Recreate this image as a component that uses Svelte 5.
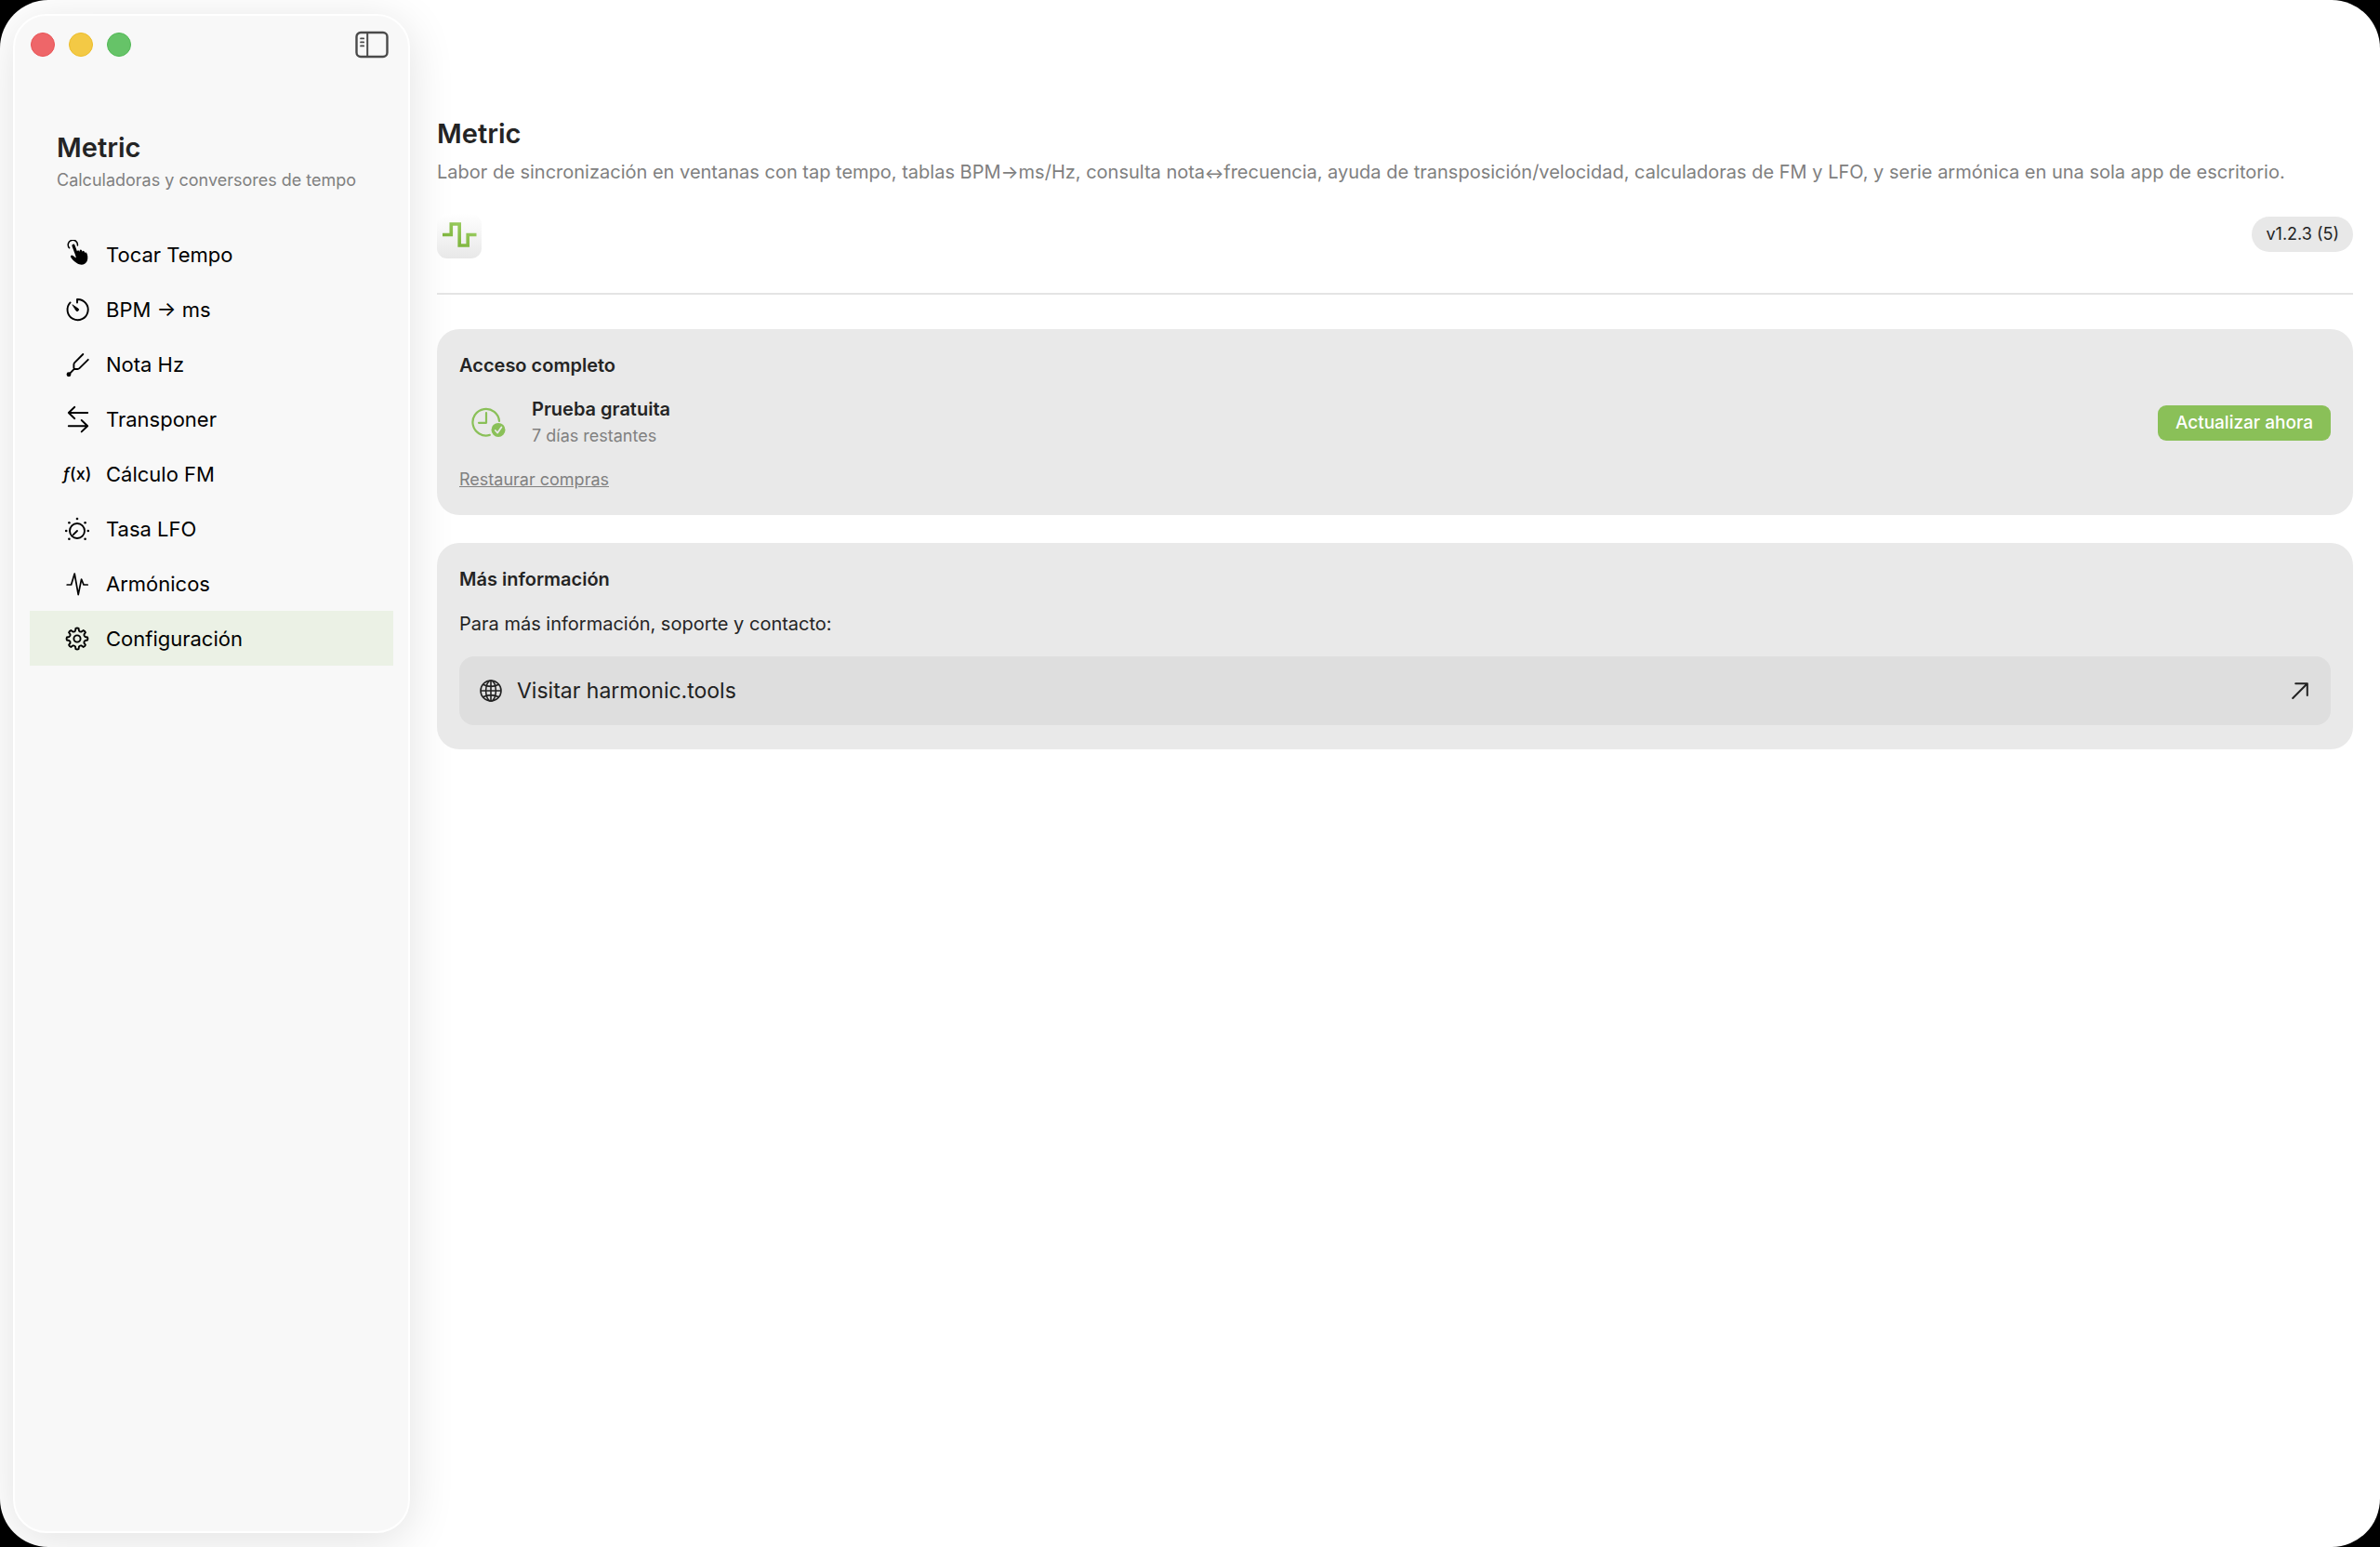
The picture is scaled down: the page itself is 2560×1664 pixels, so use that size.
<script lang="ts">
  type Item = { id: string; label: string };

  const items: Item[] = [
    { id: 'tap', label: 'Tocar Tempo' },
    { id: 'bpm', label: 'BPM → ms' },
    { id: 'note', label: 'Nota Hz' },
    { id: 'transpose', label: 'Transponer' },
    { id: 'fm', label: 'Cálculo FM' },
    { id: 'lfo', label: 'Tasa LFO' },
    { id: 'harmonics', label: 'Armónicos' },
    { id: 'settings', label: 'Configuración' }
  ];

  let selected = $state('settings');

  const lfoDots = [[16, 5], [7.4, 9.2], [24.6, 9.2], [4.2, 18], [27.8, 18], [7.4, 26.8], [24.6, 26.8]];

  // Outline of an eight-toothed gear centred in the 32-unit icon box
  const gear = Array.from({ length: 8 }, (_, i) => {
    const point = (deg: number, r: number) => {
      const a = ((i * 45 + deg - 90) * Math.PI) / 180;
      return `${(16 + r * Math.cos(a)).toFixed(2)} ${(16 + r * Math.sin(a)).toFixed(2)}`;
    };
    return `${i ? 'L' : 'M'}${point(-13, 8.8)}L${point(-8, 11.2)}Q${point(0, 11.8)} ${point(8, 11.2)}L${point(13, 8.8)}Q${point(22.5, 7.6)} ${point(32, 8.8)}`;
  }).join('') + 'Z';
</script>

<div class="window">
  <aside class="sidebar">
    <div class="titlebar">
      <div class="lights">
        <button class="light close" aria-label="Cerrar"></button>
        <button class="light minimize" aria-label="Minimizar"></button>
        <button class="light zoom" aria-label="Ampliar"></button>
      </div>
      <button class="toggle" aria-label="Mostrar u ocultar la barra lateral">
        <svg width="36" height="30" viewBox="0 0 36 30" fill="none" stroke="#4a4a4a" stroke-linecap="round">
          <rect x="1.5" y="2" width="33" height="26" rx="4.5" stroke-width="2.4" />
          <path d="M13.2 2v26" stroke-width="2" />
          <path d="M6 8.4h3.2M6 12.4h3.2M6 16.4h3.2" stroke-width="1.7" />
        </svg>
      </button>
    </div>

    <div class="brand">
      <h2>Metric</h2>
      <p>Calculadoras y conversores de tempo</p>
    </div>

    <nav>
      {#each items as item (item.id)}
        <button class="item" class:active={selected === item.id} onclick={() => (selected = item.id)}>
          <span class="glyph">
            {#if item.id === 'fm'}
              <span class="fx"><i>ƒ</i>(x)</span>
            {:else}
              <svg width="32" height="32" viewBox="0 0 32 32" fill="none" stroke="#000" stroke-width="1.9" stroke-linecap="round" stroke-linejoin="round">
                {#if item.id === 'tap'}
                  <path d="M7.6 8.8A5.1 5.1 0 1 1 16.4 6" stroke-width="1.5" />
                  <path d="M12 6.2L15.8 16.5" stroke-width="3.2" />
                  <path d="M14.7 13.4L16.6 11.4Q17.6 11 18.4 12.8Q18.6 10.4 20 10.6Q21.2 10.8 21.6 12.8Q22 11.6 23 11.9Q24 12.3 24.6 14Q25 13 26 13.8C27.4 16 27.9 20 26.6 23C24.6 27.2 19.4 27.6 15.6 25C12.6 23.2 10.6 21 8.9 18.2Q8.6 16.4 10.4 16.4Q12 16.8 14.6 19.4Z" fill="#000" stroke="none" />
                {:else if item.id === 'bpm'}
                  <path d="M16 8.6V5A11.1 11.1 0 1 1 8.6 8.4" />
                  <path d="M11.2 11L17.4 15.2A1.6 1.6 0 0 1 15.2 17.4Z" fill="#000" stroke-width=".8" />
                {:else if item.id === 'note'}
                  <path d="M22.3 5L13.2 14.2Q12.4 15 12.4 16.2V19.6Q12.4 21 13.8 21H16.4Q17.6 21 18.4 20.2L27.8 10.8M12.8 20.8L7 26.8" />
                  <circle cx="7" cy="26.8" r="1.5" fill="#000" />
                {:else if item.id === 'transpose'}
                  <path d="M27.2 9H6.8M13.3 2.8L6.8 9L13.3 15.2M6.8 23.2H27.2M20.7 17L27.2 23.2L20.7 29.4" />
                {:else if item.id === 'lfo'}
                  <circle cx="16" cy="18" r="8" />
                  <path d="M16 18L11.8 22.2" />
                  {#each lfoDots as [x, y]}
                    <circle cx={x} cy={y} r="1.3" fill="#000" stroke="none" />
                  {/each}
                {:else if item.id === 'harmonics'}
                  <path d="M5.2 17H9.6L13.2 5L17.2 27.6L20.6 11L23 17H27.2" stroke-width="1.7" />
                {:else}
                  <path d={gear} />
                  <circle cx="16" cy="16" r="3.6" />
                {/if}
              </svg>
            {/if}
          </span>
          {item.label}
        </button>
      {/each}
    </nav>
  </aside>

  <main>
    <header>
      <h1>Metric</h1>
      <p class="lead">Labor de sincronización en ventanas con tap tempo, tablas BPM→ms/Hz, consulta nota<span class="both">↔</span>frecuencia, ayuda de transposición/velocidad, calculadoras de FM y LFO, y serie armónica en una sola app de escritorio.</p>
      <div class="meta">
        <svg width="48" height="48" viewBox="0 0 48 48" fill="none" role="img" aria-label="Metric">
          <defs>
            <linearGradient id="tile" x1="0" y1="0" x2="0" y2="1">
              <stop offset="0" stop-color="#fff" />
              <stop offset="1" stop-color="#e8e8e8" />
            </linearGradient>
            <linearGradient id="wave" x1="0" y1="1" x2="1" y2="0">
              <stop offset="0" stop-color="#74ad31" />
              <stop offset="1" stop-color="#a2d26a" />
            </linearGradient>
          </defs>
          <rect width="48" height="48" rx="11" fill="url(#tile)" />
          <path d="M6 22.5H15.3V11H24.2V34H33.2V22.5H42.5" stroke="url(#wave)" stroke-width="3.6" />
        </svg>
        <span class="version">v1.2.3 (5)</span>
      </div>
    </header>

    <section class="card">
      <h3>Acceso completo</h3>
      <div class="trial">
        <svg width="56" height="40" viewBox="0 0 56 40" fill="none" stroke="#8ac058" stroke-width="2.2" stroke-linecap="round" stroke-linejoin="round">
          <path d="M32.8 32.9A14.3 14.3 0 1 1 43 17.9" />
          <path d="M29 9.2V19.8H21" />
          <circle cx="42" cy="27.4" r="7.5" fill="#8ac058" stroke="none" />
          <path d="M38.8 28L41.2 30.6L45.4 24.4" stroke="#e8e8e8" stroke-width="1.8" />
        </svg>
        <div class="plan">
          <strong>Prueba gratuita</strong>
          <span>7 días restantes</span>
        </div>
        <button class="upgrade">Actualizar ahora</button>
      </div>
      <button class="restore">Restaurar compras</button>
    </section>

    <section class="card">
      <h3>Más información</h3>
      <p class="info">Para más información, soporte y contacto:</p>
      <a class="visit" href="https://harmonic.tools">
        <svg width="24" height="24" viewBox="0 0 24 24" fill="none" stroke="#222" stroke-width="1.6">
          <circle cx="12" cy="12" r="11" />
          <ellipse cx="12" cy="12" rx="5.4" ry="11" />
          <path d="M12 1V23M1 12H23M3.6 5.2Q12 9.6 20.4 5.2M3.6 18.8Q12 14.4 20.4 18.8" />
        </svg>
        <span>Visitar harmonic.tools</span>
        <svg width="20" height="20" viewBox="0 0 20 20" fill="none" stroke="#222" stroke-width="2" stroke-linecap="round" stroke-linejoin="round">
          <path d="M1.2 18L16.8 2.2M4.2 2.2H16.8V15" />
        </svg>
      </a>
    </section>
  </main>
</div>

<style>
  :global(body) {
    margin: 0;
    background: #000;
  }

  .window {
    display: flex;
    box-sizing: border-box;
    min-height: 100vh;
    padding: 15px 29px 15px 14px;
    gap: 29px;
    overflow: hidden;
    border-radius: 52px;
    background: #fff;
    color: #242424;
    font-family: Inter, 'Liberation Sans', sans-serif;
    font-size: 20px;
    line-height: 24px;
  }

  h1, h2, h3, p {
    margin: 0;
  }

  button {
    padding: 0;
    border: 0;
    background: none;
    color: inherit;
    font: inherit;
    text-align: left;
  }

  svg {
    display: block;
    flex: none;
  }

  .sidebar {
    flex: none;
    box-sizing: border-box;
    width: 427px;
    padding: 16px;
    border: 2px solid #fff;
    border-radius: 36px;
    background: #f8f8f8;
    box-shadow: 0 8px 50px rgba(0, 0, 0, 0.12);
  }

  .titlebar {
    display: flex;
    align-items: center;
    justify-content: space-between;
    height: 30px;
    padding: 0 5px 0 1px;
  }

  .lights {
    display: flex;
    gap: 15px;
  }

  .light {
    box-sizing: border-box;
    width: 26px;
    height: 26px;
    border: 1px solid;
    border-radius: 50%;
  }

  .close {
    border-color: #e85254;
    background: #ee6669;
  }

  .minimize {
    border-color: #ecbc28;
    background: #f3c945;
  }

  .zoom {
    border-color: #50b854;
    background: #66c368;
  }

  .brand {
    padding: 78px 0 38px 29px;
  }

  h1, h2 {
    font-size: 29px;
    font-weight: 600;
    line-height: 36px;
  }

  .brand p {
    padding-top: 5px;
    color: #808080;
    font-size: 18px;
  }

  .item {
    display: flex;
    align-items: center;
    gap: 15px;
    box-sizing: border-box;
    width: 100%;
    height: 59px;
    padding-left: 35px;
    color: #000;
    font-size: 22px;
  }

  .active {
    background: #ebf1e5;
  }

  .glyph {
    display: flex;
    justify-content: center;
    width: 32px;
  }

  .fx {
    font-size: 18px;
    font-weight: 500;
  }

  main {
    flex: 1;
    min-width: 0;
    padding-top: 111px;
  }

  .lead {
    padding-top: 11px;
    color: #808080;
  }

  .both {
    font-size: 15px;
    font-weight: 600;
    line-height: 1;
  }

  .meta {
    display: flex;
    align-items: flex-start;
    justify-content: space-between;
    padding: 33px 0 37px;
    border-bottom: 2px solid #e4e4e4;
  }

  .version {
    margin-top: 3px;
    padding: 7px 15px;
    border-radius: 20px;
    background: #e8e8e8;
    font-size: 18px;
  }

  .card {
    margin-top: 37px;
    padding: 27px 24px 26px;
    border-radius: 24px;
    background: #e9e9e9;
  }

  .card + .card {
    margin-top: 30px;
  }

  h3, strong {
    font-size: 20px;
    font-weight: 600;
    line-height: 24px;
  }

  .trial {
    display: flex;
    align-items: center;
    gap: 22px;
    padding: 23px 0;
  }

  .plan {
    display: flex;
    flex: 1;
    flex-direction: column;
    gap: 5px;
  }

  .plan span, .restore {
    color: #808080;
    font-size: 18px;
  }

  .upgrade {
    padding: 7px 19px;
    border-radius: 9px;
    background: #8ac058;
    color: #fff;
    font-size: 19px;
    font-weight: 500;
  }

  .restore {
    display: block;
    text-decoration: underline;
  }

  .info {
    padding: 24px 0 23px;
  }

  .visit {
    display: flex;
    align-items: center;
    gap: 16px;
    padding: 22px;
    border-radius: 16px;
    background: #dedede;
    color: #222;
    font-size: 23px;
    line-height: 30px;
    text-decoration: none;
  }

  .visit span {
    flex: 1;
  }
</style>
